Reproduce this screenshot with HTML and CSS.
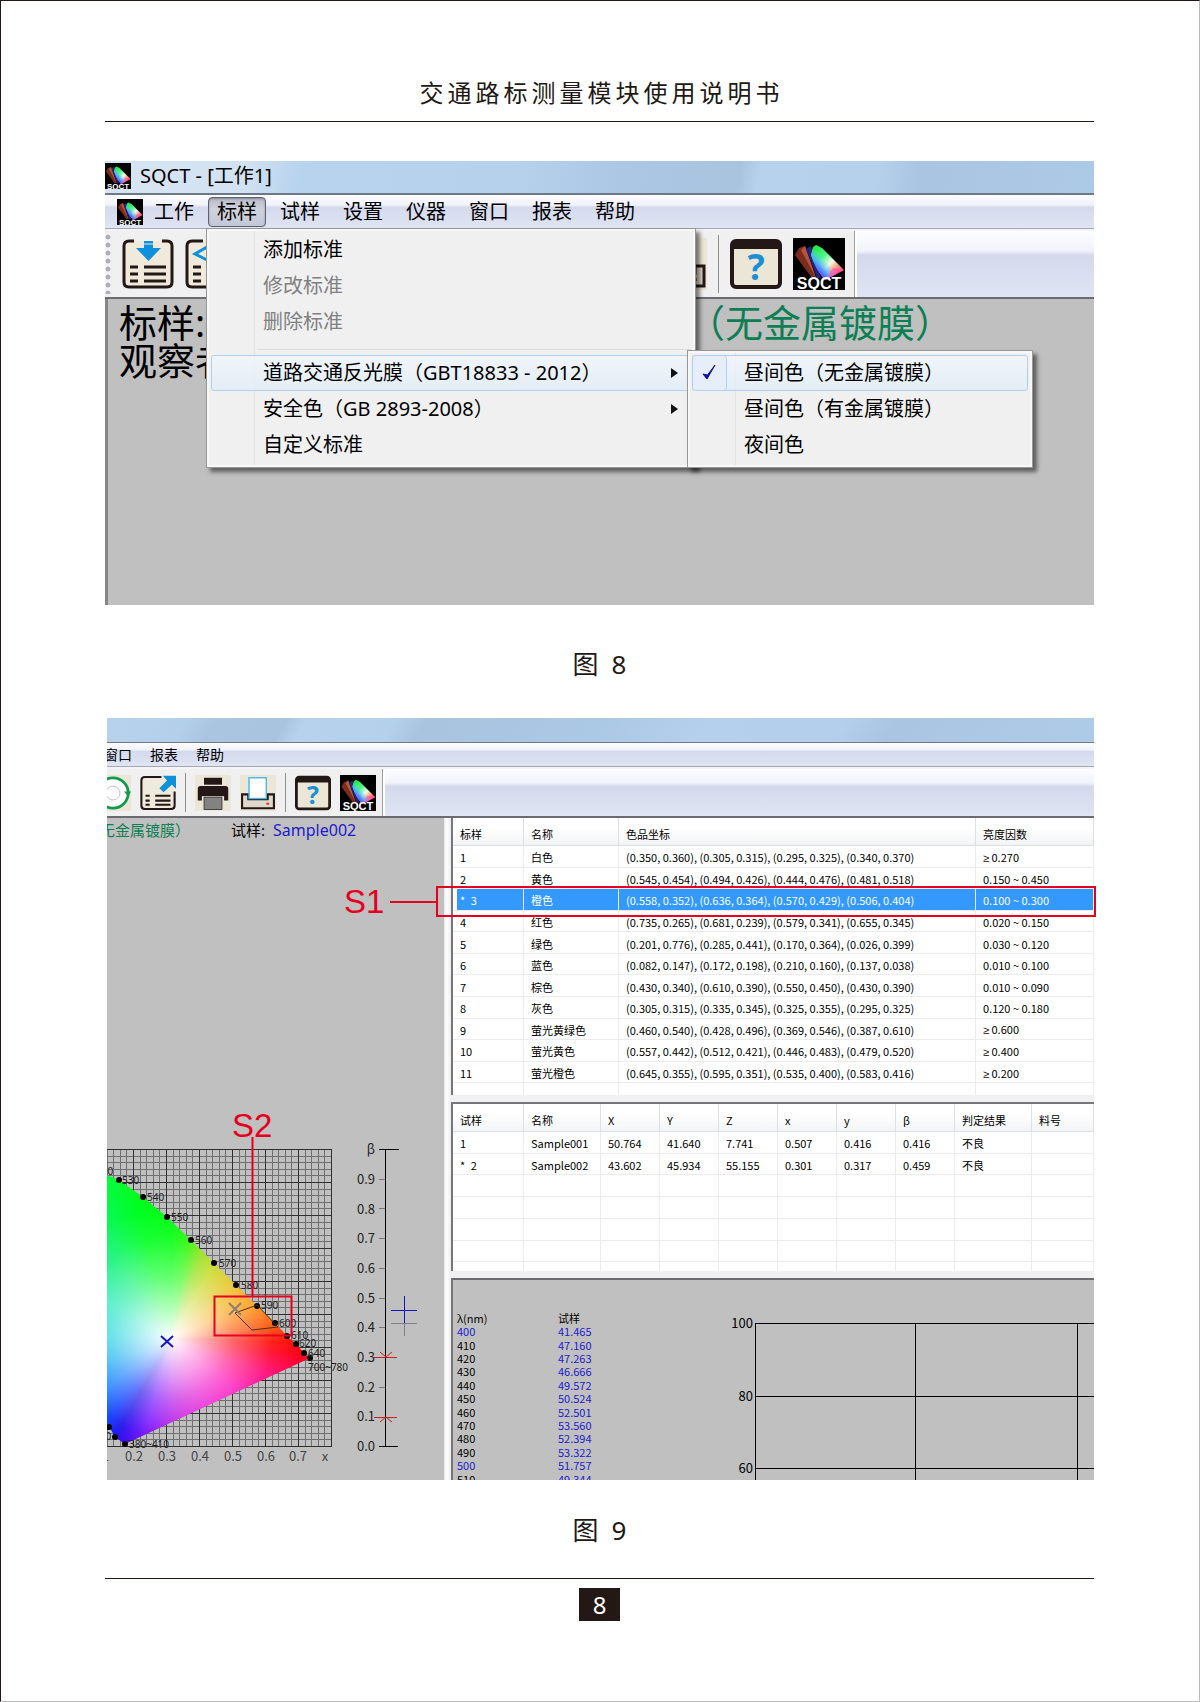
FILE: index.html
```
<!DOCTYPE html>
<html lang="zh-CN">
<head>
    <meta charset="UTF-8">
    <meta name="viewport" content="width=device-width, initial-scale=1.0">
    <title>交通路标测量模块使用说明书</title>
    <link rel="stylesheet" href="styles.css">
</head>
<body>
    <!-- shared icons -->
    <svg class="sprite" aria-hidden="true">
        <defs>
            <linearGradient id="logoFill" gradientUnits="userSpaceOnUse" x1="21" y1="8" x2="49" y2="36">
                <stop offset="0" stop-color="#19e832"/>
                <stop offset="0.35" stop-color="#4df58a"/>
                <stop offset="0.6" stop-color="#f4fbe8"/>
                <stop offset="0.78" stop-color="#ff9a7a"/>
                <stop offset="1" stop-color="#ff2a50"/>
            </linearGradient>
            <linearGradient id="logoBlue" gradientUnits="userSpaceOnUse" x1="38" y1="28" x2="27" y2="38">
                <stop offset="0" stop-color="#5ad8ff" stop-opacity="0"/>
                <stop offset="0.6" stop-color="#50a0ff"/>
                <stop offset="1" stop-color="#6a30ff"/>
            </linearGradient>
            <symbol id="i-logo" viewBox="0 0 52 52">
                <rect width="52" height="52" fill="#000"/>
                <path d="M2 17L6 10L12 8L23 40H19Z" fill="#7c2c1c"/>
                <path d="M8 12L12 8L23 40Z" fill="#b4553a"/>
                <path d="M13 11L18 8L28 40H24Z" fill="#20247c"/>
                <path d="M18 17L20 9L23 7L29 10L51 32L32 42Q22 30 18 17Z" fill="url(#logoFill)"/>
                <path d="M18 17L20 9L23 7L29 10L51 32L32 42Q22 30 18 17Z" fill="url(#logoBlue)"/>
                <path d="M32 42L51 32L40 30Z" fill="#ff4fc0" opacity="0.6"/>
                <text class="logo-text" x="26" y="51" text-anchor="middle">SQCT</text>
            </symbol>
            <symbol id="i-load" viewBox="0 0 52 52">
                <rect x="3" y="3" width="46" height="46" rx="4" fill="#efeadb"/>
                <path d="M12 3H7Q2 3 2 8V44Q2 49 7 49H45Q50 49 50 44V8Q50 3 45 3H40" fill="none" stroke="#231815" stroke-width="3"/>
                <path d="M22 3H31V10H39L26.500 23L14 10H22Z" fill="#0f90dc"/>
                <path d="M22 6H31" stroke="#efeadb" stroke-width="1"/>
                <path d="M8 29H16M8 36H16M8 43H16M22 29H44M22 36H44M22 43H44" stroke="#231815" stroke-width="3"/>
            </symbol>
            <symbol id="i-edit" viewBox="0 0 52 52">
                <rect x="3" y="3" width="46" height="46" rx="4" fill="#efeadb"/>
                <path d="M18 3H7Q2 3 2 8V44Q2 49 7 49H45Q50 49 50 44V8Q50 3 45 3H40" fill="none" stroke="#231815" stroke-width="3"/>
                <path d="M22 9L10 16L22 22" fill="none" stroke="#0f90dc" stroke-width="3"/>
                <path d="M8 29H16M8 36H16M8 43H16M22 29H44M22 36H44M22 43H44" stroke="#231815" stroke-width="3"/>
            </symbol>
            <symbol id="i-ring" viewBox="0 0 52 52">
                <rect width="52" height="52" fill="#ebe6d6"/>
                <circle cx="26" cy="26" r="22" fill="#fff" stroke="#0f9a4c" stroke-width="4"/>
                <circle cx="26" cy="26" r="10" fill="#fff" stroke="#a9a9a9" stroke-width="1"/>
                <path d="M42 24H52L48 31Z" fill="#0f9a4c"/>
            </symbol>
            <symbol id="i-export" viewBox="0 0 52 52">
                <rect x="3" y="3" width="46" height="46" rx="4" fill="#efeadb"/>
                <path d="M31 3H7Q2 3 2 8V44Q2 49 7 49H45Q50 49 50 44V24" fill="none" stroke="#231815" stroke-width="3"/>
                <path d="M33 1H52V20L46 14L34 25L28 19L39 8Z" fill="#0f90dc"/>
                <path d="M8 30H14M8 37H14M8 43H14M22 30H44M22 37H44M22 43H44" stroke="#231815" stroke-width="3"/>
            </symbol>
            <symbol id="i-printer" viewBox="0 0 52 52">
                <rect width="52" height="52" fill="#ebe6d6"/>
                <path d="M13 4H39V14H13Z" fill="#231815"/>
                <path d="M8 16H44Q48 16 48 20V37H42V31H10V37H4V20Q4 16 8 16Z" fill="#231815"/>
                <path d="M10 31H42V34H10Z" fill="#fff"/>
                <rect x="13" y="32" width="26" height="18" fill="#828282" stroke="#231815" stroke-width="1"/>
            </symbol>
            <symbol id="i-tray" viewBox="0 0 52 52">
                <rect width="52" height="52" fill="#ebe6d6"/>
                <path d="M12 28H3V48H49V28H40V35H12Z" fill="#e0d8cc" stroke="#231815" stroke-width="3"/>
                <rect x="13" y="4" width="25" height="30" fill="#fff" stroke="#45b5e8" stroke-width="2"/>
                <rect x="38" y="40" width="4" height="3" fill="#e04030"/>
            </symbol>
            <symbol id="i-help" viewBox="0 0 52 52">
                <rect x="2" y="3" width="48" height="46" rx="4" fill="#ebe6d6" stroke="#231815" stroke-width="4"/>
                <path d="M2 11V6Q2 3 5 3H47Q50 3 50 6V11Z" fill="#231815"/>
                <text class="help-text" x="26" y="42" text-anchor="middle">?</text>
            </symbol>
        </defs>
    </svg>

    <div class="page">
        <header class="page-header">
            <h1>交通路标测量模块使用说明书</h1>
        </header>

        <main>
            <figure class="figure figure-menu">
                <div class="window">
                    <div class="title-bar">
                        <svg class="app-icon"><use href="#i-logo"/></svg>
                        <span>SQCT - [工作1]</span>
                    </div>
                    <nav class="menu-bar">
                        <svg class="app-icon"><use href="#i-logo"/></svg>
                        <button type="button">工作</button>
                        <div class="menu-root">
                            <button type="button" class="open" aria-haspopup="true" aria-expanded="true">标样</button>
                            <div class="dropdown" role="menu">
                                <button type="button" role="menuitem">添加标准</button>
                                <button type="button" role="menuitem" disabled>修改标准</button>
                                <button type="button" role="menuitem" disabled>删除标准</button>
                                <hr>
                                <button type="button" role="menuitem" class="active has-sub">道路交通反光膜（GBT18833 - 2012）</button>
                                <button type="button" role="menuitem" class="has-sub">安全色（GB 2893-2008）</button>
                                <button type="button" role="menuitem">自定义标准</button>
                                <div class="dropdown submenu" role="menu">
                                    <button type="button" role="menuitemradio" aria-checked="true" class="active">
                                        <svg class="check" viewBox="0 0 35 36"><rect x="0.500" y="0.500" width="34" height="35" rx="3"/><path d="M11 19L15 24L23 10L15.500 20Z"/></svg>昼间色（无金属镀膜）
                                    </button>
                                    <button type="button" role="menuitemradio" aria-checked="false">昼间色（有金属镀膜）</button>
                                    <button type="button" role="menuitemradio" aria-checked="false">夜间色</button>
                                </div>
                            </div>
                        </div>
                        <button type="button">试样</button>
                        <button type="button">设置</button>
                        <button type="button">仪器</button>
                        <button type="button">窗口</button>
                        <button type="button">报表</button>
                        <button type="button">帮助</button>
                    </nav>
                    <div class="toolbar">
                        <div class="tools">
                            <span class="grip"></span>
                            <button type="button" aria-label="载入"><svg><use href="#i-load"/></svg></button>
                            <button type="button" aria-label="编辑"><svg><use href="#i-edit"/></svg></button>
                            <span class="spacer"></span>
                            <button type="button" aria-label="打印预览"><svg><use href="#i-tray"/></svg></button>
                            <span class="sep"></span>
                            <button type="button" aria-label="帮助"><svg><use href="#i-help"/></svg></button>
                            <button type="button" aria-label="关于"><svg><use href="#i-logo"/></svg></button>
                        </div>
                    </div>
                    <div class="client">
                        <div class="info"><span>标样:</span><span class="green">（无金属镀膜）</span></div>
                        <div class="info"><span>观察者</span></div>
                    </div>
                </div>
                <figcaption>图&ensp;8</figcaption>
            </figure>

            <figure class="figure figure-data">
                <div class="window compact">
                    <div class="title-bar"></div>
                    <nav class="menu-bar">
                        <button type="button">窗口</button>
                        <button type="button">报表</button>
                        <button type="button">帮助</button>
                    </nav>
                    <div class="toolbar">
                        <div class="tools">
                            <button type="button" aria-label="校准"><svg><use href="#i-ring"/></svg></button>
                            <button type="button" aria-label="导出"><svg><use href="#i-export"/></svg></button>
                            <span class="sep"></span>
                            <button type="button" aria-label="打印"><svg><use href="#i-printer"/></svg></button>
                            <button type="button" aria-label="打印预览"><svg><use href="#i-tray"/></svg></button>
                            <span class="sep"></span>
                            <button type="button" aria-label="帮助"><svg><use href="#i-help"/></svg></button>
                            <button type="button" aria-label="关于"><svg><use href="#i-logo"/></svg></button>
                        </div>
                    </div>
                    <div class="panes">
                        <section class="chroma-pane">
                            <div class="pane-info">
                                <span class="green">无金属镀膜）</span>
                                <span>试样:</span>
                                <span class="blue">Sample002</span>
                            </div>
                            <svg class="chroma" viewBox="0 0 337 380">
                                <defs>
                                    <pattern id="grid" x="26" y="49" width="33" height="33" patternUnits="userSpaceOnUse">
                                        <path d="M7.500 0V33M13.500 0V33M20.500 0V33M26.500 0V33M0 7.500H33M0 13.500H33M0 20.500H33M0 26.500H33" stroke="#707070"/>
                                        <path d="M0.500 0V33M0 0.500H33" stroke="#303030"/>
                                    </pattern>
                                </defs>
                                <rect x="0" y="49" width="225" height="298" fill="url(#grid)"/>
                                <foreignObject x="0" y="0" width="225" height="380"><div class="gamut"></div></foreignObject>

                                <g class="dots">
                                    <circle cx="12" cy="80" r="3"/><circle cx="36" cy="97" r="3"/><circle cx="60" cy="117" r="3"/>
                                    <circle cx="84" cy="140" r="3"/><circle cx="107" cy="163" r="3"/><circle cx="129" cy="185" r="3"/>
                                    <circle cx="150" cy="206" r="3"/><circle cx="168" cy="223" r="3"/><circle cx="180" cy="236" r="3"/>
                                    <circle cx="189" cy="244" r="3"/><circle cx="197" cy="253" r="3"/><circle cx="203" cy="258" r="3"/>
                                    <circle cx="18" cy="344" r="3"/><circle cx="8" cy="337" r="3"/><circle cx="2" cy="327" r="3"/>
                                </g>
                                <g class="nm">
                                    <text x="-11" y="75">520</text>
                                    <text x="15" y="84">530</text>
                                    <text x="40" y="101">540</text>
                                    <text x="64" y="121">550</text>
                                    <text x="88" y="144">560</text>
                                    <text x="112" y="167">570</text>
                                    <text x="134" y="189">580</text>
                                    <text x="154" y="209">590</text>
                                    <text x="172" y="227">600</text>
                                    <text x="184" y="239">610</text>
                                    <text x="192" y="247">620</text>
                                    <text x="201" y="257">640</text>
                                    <text x="201" y="271">700~780</text>
                                    <text x="22" y="348">380~410</text>
                                    <text x="-13" y="340">460</text>
                                </g>
                                <path class="target" d="M128 213L150 205L171 227L145 230Z"/>
                                <path d="M122 203L134 215M134 203L122 215" stroke="#8a8070" stroke-width="2"/>
                                <path d="M54 236L66 247M66 236L54 247" stroke="#1a14c8" stroke-width="2"/>

                                <g class="axis-x">
                                    <text x="-7" y="361">0.1</text>
                                    <text x="27" y="361">0.2</text>
                                    <text x="60" y="361">0.3</text>
                                    <text x="93" y="361">0.4</text>
                                    <text x="126" y="361">0.5</text>
                                    <text x="159" y="361">0.6</text>
                                    <text x="191" y="361">0.7</text>
                                    <text x="218" y="361">x</text>
                                </g>

                                <g class="axis-beta">
                                    <text x="268" y="54">β</text>
                                    <text x="268" y="84">0.9</text>
                                    <text x="268" y="114">0.8</text>
                                    <text x="268" y="143">0.7</text>
                                    <text x="268" y="173">0.6</text>
                                    <text x="268" y="203">0.5</text>
                                    <text x="268" y="232">0.4</text>
                                    <text x="268" y="262">0.3</text>
                                    <text x="268" y="292">0.2</text>
                                    <text x="268" y="321">0.1</text>
                                    <text x="268" y="351">0.0</text>
                                </g>
                                <path d="M272 79.500H278M272 108.500H278M272 138.500H278M272 168.500H278M272 198.500H278M272 227.500H278M272 287.500H278" stroke="#777"/>
                                <path d="M272 49.500H292M278.500 49V347M272 346.500H291" stroke="#000" fill="none"/>
                                <path d="M267 257.500H290M273 252L279 257L285 252M267 317.500H290M273 322L279 317L285 322" stroke="#c82020" fill="none"/>
                                <path d="M284 223.500H310M297.500 211V236" stroke="#808080"/>
                                <path d="M284 210.500H310M297.500 196V223" stroke="#1a14c8"/>

                                <g class="callout">
                                    <text x="125" y="37">S2</text>
                                    <path d="M145.500 37V196M107.500 196.500H184.500V235.500H107.500Z"/>
                                </g>
                            </svg>
                        </section>

                        <div class="splitter"></div>

                        <section class="data-pane">
                            <div class="list standards">
                                <table>
                                    <colgroup><col class="c-id"><col class="c-name"><col class="c-coord"><col></colgroup>
                                    <thead>
                                        <tr><th>标样</th><th>名称</th><th>色品坐标</th><th>亮度因数</th></tr>
                                    </thead>
                                    <tbody>
                                        <tr><td>1</td><td>白色</td><td>(0.350, 0.360), (0.305, 0.315), (0.295, 0.325), (0.340, 0.370)</td><td><span class="ge">≥</span> 0.270</td></tr>
                                        <tr><td>2</td><td>黄色</td><td>(0.545, 0.454), (0.494, 0.426), (0.444, 0.476), (0.481, 0.518)</td><td>0.150 ~ 0.450</td></tr>
                                        <tr class="selected"><td>*&ensp;3</td><td>橙色</td><td>(0.558, 0.352), (0.636, 0.364), (0.570, 0.429), (0.506, 0.404)</td><td>0.100 ~ 0.300</td></tr>
                                        <tr><td>4</td><td>红色</td><td>(0.735, 0.265), (0.681, 0.239), (0.579, 0.341), (0.655, 0.345)</td><td>0.020 ~ 0.150</td></tr>
                                        <tr><td>5</td><td>绿色</td><td>(0.201, 0.776), (0.285, 0.441), (0.170, 0.364), (0.026, 0.399)</td><td>0.030 ~ 0.120</td></tr>
                                        <tr><td>6</td><td>蓝色</td><td>(0.082, 0.147), (0.172, 0.198), (0.210, 0.160), (0.137, 0.038)</td><td>0.010 ~ 0.100</td></tr>
                                        <tr><td>7</td><td>棕色</td><td>(0.430, 0.340), (0.610, 0.390), (0.550, 0.450), (0.430, 0.390)</td><td>0.010 ~ 0.090</td></tr>
                                        <tr><td>8</td><td>灰色</td><td>(0.305, 0.315), (0.335, 0.345), (0.325, 0.355), (0.295, 0.325)</td><td>0.120 ~ 0.180</td></tr>
                                        <tr><td>9</td><td>萤光黄绿色</td><td>(0.460, 0.540), (0.428, 0.496), (0.369, 0.546), (0.387, 0.610)</td><td><span class="ge">≥</span> 0.600</td></tr>
                                        <tr><td>10</td><td>萤光黄色</td><td>(0.557, 0.442), (0.512, 0.421), (0.446, 0.483), (0.479, 0.520)</td><td><span class="ge">≥</span> 0.400</td></tr>
                                        <tr><td>11</td><td>萤光橙色</td><td>(0.645, 0.355), (0.595, 0.351), (0.535, 0.400), (0.583, 0.416)</td><td><span class="ge">≥</span> 0.200</td></tr>
                                        <tr><td></td><td></td><td></td><td></td></tr>
                                    </tbody>
                                </table>
                            </div>

                            <div class="list samples">
                                <table>
                                    <colgroup>
                                        <col class="c-id"><col class="c-sample"><col class="c-num"><col class="c-num"><col class="c-num">
                                        <col class="c-num"><col class="c-num"><col class="c-num"><col class="c-sample"><col>
                                    </colgroup>
                                    <thead>
                                        <tr><th>试样</th><th>名称</th><th>X</th><th>Y</th><th>Z</th><th>x</th><th>y</th><th>β</th><th>判定结果</th><th>料号</th></tr>
                                    </thead>
                                    <tbody>
                                        <tr><td>1</td><td>Sample001</td><td>50.764</td><td>41.640</td><td>7.741</td><td>0.507</td><td>0.416</td><td>0.416</td><td>不良</td><td></td></tr>
                                        <tr><td>*&ensp;2</td><td>Sample002</td><td>43.602</td><td>45.934</td><td>55.155</td><td>0.301</td><td>0.317</td><td>0.459</td><td>不良</td><td></td></tr>
                                        <tr><td></td><td></td><td></td><td></td><td></td><td></td><td></td><td></td><td></td><td></td></tr>
                                        <tr><td></td><td></td><td></td><td></td><td></td><td></td><td></td><td></td><td></td><td></td></tr>
                                        <tr><td></td><td></td><td></td><td></td><td></td><td></td><td></td><td></td><td></td><td></td></tr>
                                        <tr><td></td><td></td><td></td><td></td><td></td><td></td><td></td><td></td><td></td><td></td></tr>
                                        <tr><td></td><td></td><td></td><td></td><td></td><td></td><td></td><td></td><td></td><td></td></tr>
                                    </tbody>
                                </table>
                            </div>

                            <div class="spectrum">
                                <table>
                                    <thead>
                                        <tr><th>λ(nm)</th><th>试样</th></tr>
                                    </thead>
                                    <tbody>
                                        <tr class="mark"><td>400</td><td>41.465</td></tr>
                                        <tr><td>410</td><td>47.160</td></tr>
                                        <tr><td>420</td><td>47.263</td></tr>
                                        <tr><td>430</td><td>46.666</td></tr>
                                        <tr><td>440</td><td>49.572</td></tr>
                                        <tr><td>450</td><td>50.524</td></tr>
                                        <tr><td>460</td><td>52.501</td></tr>
                                        <tr><td>470</td><td>53.560</td></tr>
                                        <tr><td>480</td><td>52.394</td></tr>
                                        <tr><td>490</td><td>53.322</td></tr>
                                        <tr class="mark"><td>500</td><td>51.757</td></tr>
                                        <tr><td>510</td><td>49.344</td></tr>
                                    </tbody>
                                </table>
                                <svg class="curve" viewBox="0 0 394 201">
                                    <path d="M54 43.500H394M54 116.500H394M54 188.500H394M54.500 43V201M214.500 43V201M376.500 43V201"/>
                                    <text x="52" y="48">100</text>
                                    <text x="52" y="121">80</text>
                                    <text x="52" y="193">60</text>
                                </svg>
                            </div>
                        </section>
                    </div>
                </div>
                <div class="row-callout"><span>S1</span><i></i><b></b></div>
                <figcaption>图&ensp;9</figcaption>
            </figure>
        </main>

        <footer class="page-footer">
            <span class="page-number">8</span>
        </footer>
    </div>
</body>
</html>
```
FILE: styles.css
```
:root {
    --ink: #231815;
    --client: #c0c0c0;
    --green: #0c7f55;
    --blue: #2019d0;
    --red: #e60020;
    --bar: linear-gradient(#fdfdff 0%, #f1f3fb 30%, #d4d9ec 37%, #e0e5f5 100%);
}

* {
    box-sizing: border-box;
}

body {
    margin: 0;
    font-family: "Noto Sans", "Noto Sans CJK SC", sans-serif;
    color: #000;
    background: #fff;
}

button {
    font: inherit;
    color: inherit;
    background: none;
    border: 0;
    padding: 0;
}

svg {
    display: block;
}

.sprite {
    position: absolute;
    width: 0;
    height: 0;
}

.page {
    min-height: 100vh;
    padding: 0 105px 0 104px;
    border: 1px solid #bbb;
    border-top-color: var(--ink);
    border-left-color: var(--ink);
}

.page-header {
    padding: 74px 0 10px 4px;
    border-bottom: 1px solid var(--ink);
}

h1 {
    margin: 0;
    font-size: 24px;
    font-weight: 400;
    line-height: 36px;
    letter-spacing: 4px;
    text-align: center;
    color: var(--ink);
}

/* figures */
.figure {
    position: relative;
    margin: 39px 0 0;
}

.figure-data {
    margin: 30px 0 0 2px;
}

figcaption {
    margin-top: 35px;
    font-size: 26px;
    line-height: 48px;
    text-align: center;
    color: var(--ink);
}

.figure-data figcaption {
    margin: 26px 0 0 -2px;
}

.window {
    font-size: 20px;
    background: #f0f0f0;
}

.title-bar {
    display: flex;
    align-items: center;
    gap: 9px;
    height: 34px;
    line-height: 28px;
    padding-bottom: 2px;
    background: linear-gradient(100deg, #d7e5f3 0%, #d3e2f1 14%, #b7d3ed 20%, #b5d1ec 42%, #abc7e3 52%, #a8c4df 64%, #b6d2ed 66%, #b5d1ec 78%, #a9c5e1 82%, #acc9e6 100%);
    border-bottom: 2px solid #6d7889;
}

.app-icon {
    width: 26px;
    height: 26px;
}

.menu-bar {
    display: flex;
    align-items: center;
    gap: 5px;
    height: 34px;
    padding-left: 12px;
    background: var(--bar);
    border-bottom: 1px solid #a5a7b2;
}

.menu-bar > button,
.menu-root > button {
    height: 30px;
    padding: 0 8px;
    line-height: 28px;
    border: 1px solid transparent;
    border-radius: 4px;
}

.menu-root {
    position: relative;
}

.menu-root > .open {
    display: block;
    border-color: #5f6270;
    background: linear-gradient(#b9bcc6, #d0d3de 40%, #c3c8d8);
    box-shadow: inset 0 1px 2px #85879a;
}

.menu-bar > .app-icon {
    margin-right: -3px;
}

.dropdown {
    position: absolute;
    z-index: 2;
    top: 31px;
    left: -2px;
    width: 490px;
    padding: 3px 4px 4px;
    border: 1px solid #979797;
    background: linear-gradient(#e2e3e3, #e2e3e3) 47px 0 / 1px 100% no-repeat #f0f0f0;
    box-shadow: inset 0 0 0 2px #f8f8f8, 4px 4px 4px rgba(0, 0, 0, 0.5);
}

.dropdown > button {
    position: relative;
    display: block;
    width: 100%;
    height: 36px;
    padding: 0 0 0 51px;
    line-height: 34px;
    text-align: left;
    white-space: nowrap;
    border: 1px solid transparent;
    border-radius: 3px;
}

.dropdown > button:disabled {
    color: #808080;
}

.dropdown > .active {
    border-color: #aecff7;
    background: linear-gradient(rgba(240, 246, 252, 0.8), rgba(225, 236, 247, 0.8));
}

.dropdown hr {
    height: 15px;
    margin: 0 0 0 46px;
    border: 0;
    background: linear-gradient(#dcdcdc, #dcdcdc) 0 9px / 100% 1px no-repeat;
}

.has-sub::after {
    content: "";
    position: absolute;
    top: 12px;
    right: 12px;
    border: 5px solid transparent;
    border-left: 7px solid #111;
    border-right: 0;
}

.submenu {
    top: 121px;
    left: 480px;
    width: 346px;
    padding: 4px;
}

.check {
    position: absolute;
    top: -1px;
    left: -1px;
    width: 35px;
    height: 36px;
}

.check rect {
    fill: #e6eff9;
    stroke: #aecff7;
}

.check path {
    fill: #0c12a1;
    stroke: #0c12a1;
    stroke-width: 1;
}

.toolbar {
    display: flex;
    height: 70px;
    background: var(--bar);
    border-top: 2px solid #f4f4f8;
    border-bottom: 2px solid #6b6b70;
}

.tools {
    display: flex;
    flex: 0 0 750px;
    align-items: center;
    gap: 11px;
    padding-right: 9px;
    background: #f0f0f0;
    border-right: 1px solid #a0a0a0;
    box-shadow: 2px 0 0 #fff;
}

.tools svg {
    width: 52px;
    height: 52px;
}

.grip {
    width: 6px;
    height: 60px;
    background: radial-gradient(circle at 3px 3px, #a9b0c6 2px, #fff 3px, transparent 4px) 0 0 / 6px 8px;
}

.sep {
    align-self: stretch;
    width: 1px;
    margin: 4px 0;
    background: #8f8f8f;
}

.spacer {
    flex: 1;
}

.logo-text {
    font: bold 16px "Liberation Sans", sans-serif;
    fill: #fff;
}

.help-text {
    font: bold 36px "Noto Sans", sans-serif;
    fill: #1b8fd6;
}

.client {
    min-height: 306px;
    padding: 4px 0 0 11px;
    background: var(--client);
    border-left: 3px solid #85858a;
}

.info {
    display: grid;
    grid-template-columns: 568px 1fr;
    font-size: 38px;
    line-height: 38px;
    white-space: nowrap;
}

.green {
    color: var(--green);
}

.blue {
    color: var(--blue);
}

/* cropped data window */
.compact {
    overflow: hidden;
    font-size: 14px;
}

.compact .title-bar {
    height: 25px;
    background: linear-gradient(120deg, #b7d3ec 0%, #b3d0eb 8%, #a9c5e0 11%, #a8c4de 18%, #b6d2ed 20%, #b4d1ec 29%, #a8c4df 32%, #abc8e4 50%, #b4d0ec 60%, #b3cfeb 74%, #a9c5e1 79%, #aecbe8 100%);
    border-bottom-width: 1px;
}

.compact .menu-bar {
    gap: 0;
    height: 24px;
    padding: 0;
    margin-left: -12px;
}

.compact .menu-bar > button {
    height: 22px;
    line-height: 20px;
}

.compact .toolbar {
    height: 51px;
}

.compact .tools {
    flex: 0 0 auto;
    gap: 9px;
    padding-right: 6px;
    margin-left: -12px;
}

.compact .tools svg {
    width: 36px;
    height: 36px;
}

.panes {
    display: grid;
    grid-template-rows: 100%;
    grid-template-columns: 337px 7px 1fr;
    height: 662px;
}

.chroma-pane {
    display: flex;
    flex-direction: column;
    justify-content: space-between;
    background: var(--client);
}

.pane-info {
    display: flex;
    gap: 8px;
    margin-left: -7px;
    font-size: 15px;
    line-height: 24px;
    white-space: nowrap;
}

.pane-info .green {
    width: 123px;
}

.pane-info .blue {
    font-size: 16px;
}

.chroma {
    width: 337px;
    height: 380px;
}

.gamut {
    width: 225px;
    height: 380px;
    background:
        radial-gradient(circle at 65px 238px, #fff 0, rgba(255, 255, 255, 0.75) 24px, rgba(255, 255, 255, 0.4) 60px, rgba(255, 255, 255, 0.1) 100px, transparent 130px),
        conic-gradient(from 0deg at 65px 238px, #00ff10 0deg, #28f800 10deg, #80e000 18deg, #c0d400 30deg, #e8b400 50deg, #ff9000 68deg, #ff4800 84deg, #ff0800 92deg, #ff0020 98deg, #ff0070 110deg, #ff00b4 128deg, #e400d0 155deg, #b400e0 178deg, #6a00ff 196deg, #3400f0 205deg, #1408e8 210deg, #0030ff 218deg, #0070ff 232deg, #00a8f0 250deg, #10d0e0 272deg, #18e8b8 300deg, #10f470 325deg, #00ff20 345deg, #00ff10 360deg);
    clip-path: polygon(0 75px, 12px 80px, 36px 97px, 60px 117px, 84px 140px, 107px 163px, 129px 185px, 150px 206px, 168px 223px, 180px 236px, 189px 244px, 197px 253px, 203px 258px, 18px 344px, 8px 337px, 0 323px);
}

.nm {
    font-size: 10px;
    fill: #222;
}

.target {
    fill: none;
    stroke: #4a3010;
}

.axis-x,
.axis-beta,
.curve text {
    font-family: "Noto Sans CJK SC", sans-serif;
    font-size: 13px;
}

.axis-x {
    text-anchor: middle;
    fill: #444;
}

.axis-beta {
    text-anchor: end;
    fill: #222;
}

.callout text,
.row-callout span {
    font: 33px "Liberation Sans", sans-serif;
    fill: var(--red);
    color: var(--red);
}

.callout path {
    fill: none;
    stroke: var(--red);
    stroke-width: 2;
}

/* the red frame lies over the selected row */
.row-callout {
    position: absolute;
    top: 168px;
    left: 237px;
    right: -2px;
    display: flex;
    align-items: center;
    gap: 6px;
    height: 31px;
}

.row-callout i {
    width: 46px;
    height: 2px;
    background: var(--red);
}

.row-callout b {
    flex: 1;
    height: 31px;
    margin-left: -6px;
    border: 2px solid var(--red);
}

.splitter {
    background: linear-gradient(90deg, #e8e8e8, #fff 40%, #ececec);
}

.data-pane {
    display: flex;
    flex-direction: column;
    gap: 7px;
    min-width: 0;
    font-family: "Noto Sans CJK SC", sans-serif;
    font-size: 11px;
}

.list {
    overflow: hidden;
    background: #fff;
    border-left: 2px solid #77777b;
}

.standards {
    height: 277px;
}

.samples {
    height: 169px;
    border-top: 2px solid #77777b;
}

.list table {
    width: 100%;
    table-layout: fixed;
    border-collapse: separate;
    border-spacing: 0;
}

.standards table {
    height: 287px;
}

.samples table {
    height: 180px;
}

.c-id {
    width: 71px;
}

.c-name {
    width: 95px;
}

.c-coord {
    width: 357px;
}

.c-sample {
    width: 77px;
}

.c-num {
    width: 59px;
}

.list th,
.list td {
    height: 21px;
    padding: 2px 0 0 7px;
    line-height: 14px;
    text-align: left;
    font-weight: 400;
    white-space: nowrap;
    border-right: 1px solid #ececec;
    border-bottom: 1px solid #ececec;
}

.list th {
    height: 28px;
    padding-top: 4px;
    background: linear-gradient(#fff 40%, #f3f4f6);
    border-color: #dcdfe3;
}

.list .selected td {
    color: #fff;
    background: #3399ff;
}

.list .selected td:first-child {
    background: linear-gradient(90deg, #fff 4px, #3399ff 4px);
}

.ge {
    font-family: "Noto Sans", sans-serif;
}

.spectrum {
    display: flex;
    flex: 1;
    min-height: 0;
    overflow: hidden;
    background: var(--client);
    border-top: 2px solid #6b6b70;
    border-left: 2px solid #77777b;
}

.spectrum table {
    flex: 0 0 244px;
    width: 244px;
    height: 174px;
    margin: 32px 0 0 4px;
    table-layout: fixed;
    border-spacing: 0;
}

.spectrum th,
.spectrum td {
    padding: 0;
    line-height: 13px;
    font-weight: 400;
    text-align: left;
}

.spectrum th:first-child {
    width: 101px;
}

.spectrum .mark td,
.spectrum td + td {
    color: var(--blue);
}

.curve {
    flex: 0 0 394px;
    height: 201px;
}

.curve path {
    fill: none;
    stroke: #000;
}

.curve text {
    text-anchor: end;
}

/* footer */
.page-footer {
    display: flex;
    justify-content: center;
    margin-top: 24px;
    padding: 9px 0;
    border-top: 1px solid var(--ink);
}

.page-number {
    width: 41px;
    font-size: 24px;
    line-height: 33px;
    text-align: center;
    color: #fff;
    background: var(--ink);
}
```
